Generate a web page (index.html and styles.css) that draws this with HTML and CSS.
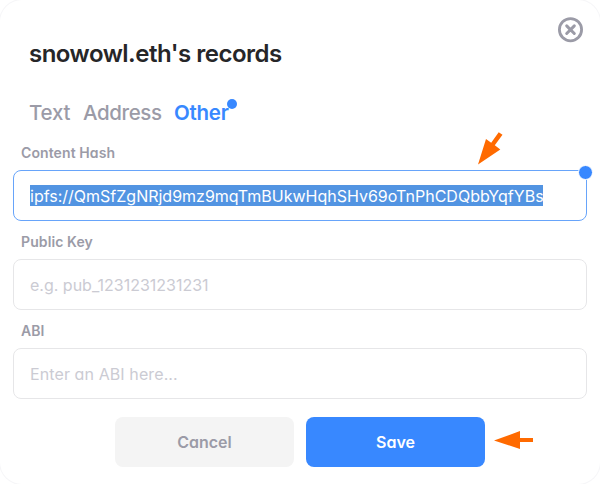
FILE: index.html
```html
<!DOCTYPE html>
<html lang="en">
<head>
<meta charset="utf-8">
<title>snowowl.eth's records</title>
<link rel="stylesheet" href="styles.css">
</head>
<body>
<main class="dialog">
  <button class="close" aria-label="Close">
    <svg width="26" height="26" viewBox="0 0 26 26" fill="none" stroke="#9b9ba7">
      <circle cx="13.5" cy="12.7" r="11.1" stroke-width="2.8"/>
      <path d="M9.7 8.9l7.6 7.6m0-7.6l-7.6 7.6" stroke-width="3" stroke-linecap="round"/>
    </svg>
  </button>
  <h1 class="title">snowowl.eth's records</h1>
  <nav class="tabs">
    <span class="tab-text">Text</span>
    <span class="tab-address">Address</span>
    <span class="tab-other">Other<i class="tab-dot"></i></span>
  </nav>
  <section class="field">
    <div class="label">Content Hash</div>
    <div class="input input-active"><span class="selected">ipfs://QmSfZgNRjd9mz9mqTmBUkwHqhSHv69oTnPhCDQbbYqfYBs</span><i class="input-dot"></i></div>
  </section>
  <section class="field">
    <div class="label">Public Key</div>
    <div class="input">e.g. pub_1231231231231</div>
  </section>
  <section class="field">
    <div class="label">ABI</div>
    <div class="input hint-abi">Enter an ABI here...</div>
  </section>
  <footer class="actions">
    <button class="btn btn-cancel">Cancel</button>
    <button class="btn btn-save">Save</button>
  </footer>
  <svg class="arrow arrow-input" width="28" height="36" viewBox="0 0 28 36">
    <path d="M1 34.5L9 9L14.2 12.8L21.7 2.2L25.5 4.8L17.8 15.3L23.3 19.5Z" fill="#ff6a00"/>
  </svg>
  <svg class="arrow arrow-save" width="40" height="20" viewBox="0 0 40 20">
    <path d="M0 10.5L26 1V8H39V12H26V19Z" fill="#ff6a00"/>
  </svg>
</main>
</body>
</html>
```
FILE: styles.css
```css
* { box-sizing: border-box; }
body {
  margin: 0;
  background: #fff;
  font-family: Inter, "Liberation Sans", sans-serif;
  font-feature-settings: "cv11";
}
.dialog {
  position: relative;
  width: 600px;
  height: 484px;
  padding: 34px 13px 0;
  border-radius: 22px;
  background: #fff;
  box-shadow: 0 0 0 1px #f6f6f8;
  overflow: hidden;
  white-space: nowrap;
}
button {
  border: 0;
  padding: 0;
  font: inherit;
  font-feature-settings: inherit;
}
.close {
  position: absolute;
  top: 17px;
  left: 557px;
  width: 26px;
  height: 26px;
  background: none;
}
.close svg { display: block; }
.title {
  margin: 0 0 0 16px;
  height: 40px;
  line-height: 40px;
  font-size: 24px;
  font-weight: 600;
  letter-spacing: -0.5px;
  color: #262628;
}
.tabs {
  display: flex;
  height: 30px;
  margin: 24px 0 0 16px;
  line-height: 30px;
  font-size: 20.5px;
  font-weight: 500;
  letter-spacing: -0.2px;
  color: #9b9ba7;
}
.tab-text { width: 54px; }
.tab-address { width: 91px; letter-spacing: -0.4px; }
.tab-other {
  position: relative;
  font-weight: 600;
  letter-spacing: -0.25px;
  color: #3888ff;
}
.tab-dot, .input-dot {
  position: absolute;
  border-radius: 50%;
  background: #3888ff;
}
.tab-dot {
  top: 1px;
  left: 53px;
  width: 10px;
  height: 10px;
}
.field { height: 89px; }
.tabs + .field { margin-top: 13px; }
.label {
  height: 29px;
  padding-left: 8px;
  line-height: 24px;
  font-size: 14px;
  font-weight: 600;
  letter-spacing: 0.1px;
  color: #9b9ba7;
}
.input {
  position: relative;
  display: flex;
  align-items: center;
  height: 51px;
  padding-left: 16px;
  border: 1px solid #e6e6e8;
  border-radius: 8px;
  font-size: 16px;
  color: #cbcbd3;
}
.hint-abi { letter-spacing: 0.1px; }
.input-active { border-color: #67a4fa; }
.selected {
  width: 513px;
  height: 21px;
  line-height: 22px;
  background: #5294e2;
  color: #fff;
}
.input-dot {
  top: -6px;
  right: -7px;
  width: 15px;
  height: 15px;
  border: 1px solid #fff;
}
.actions {
  display: flex;
  justify-content: center;
  gap: 12px;
  margin-top: 9px;
}
.btn {
  width: 179px;
  height: 50px;
  border-radius: 8px;
  font-size: 16px;
  font-weight: 600;
}
.btn-cancel { background: #f4f4f4; color: #9b9ba7; }
.btn-save { background: #3888ff; color: #fff; }
.arrow { position: absolute; }
.arrow-input { left: 477px; top: 130px; }
.arrow-save { left: 494px; top: 430px; }
```
